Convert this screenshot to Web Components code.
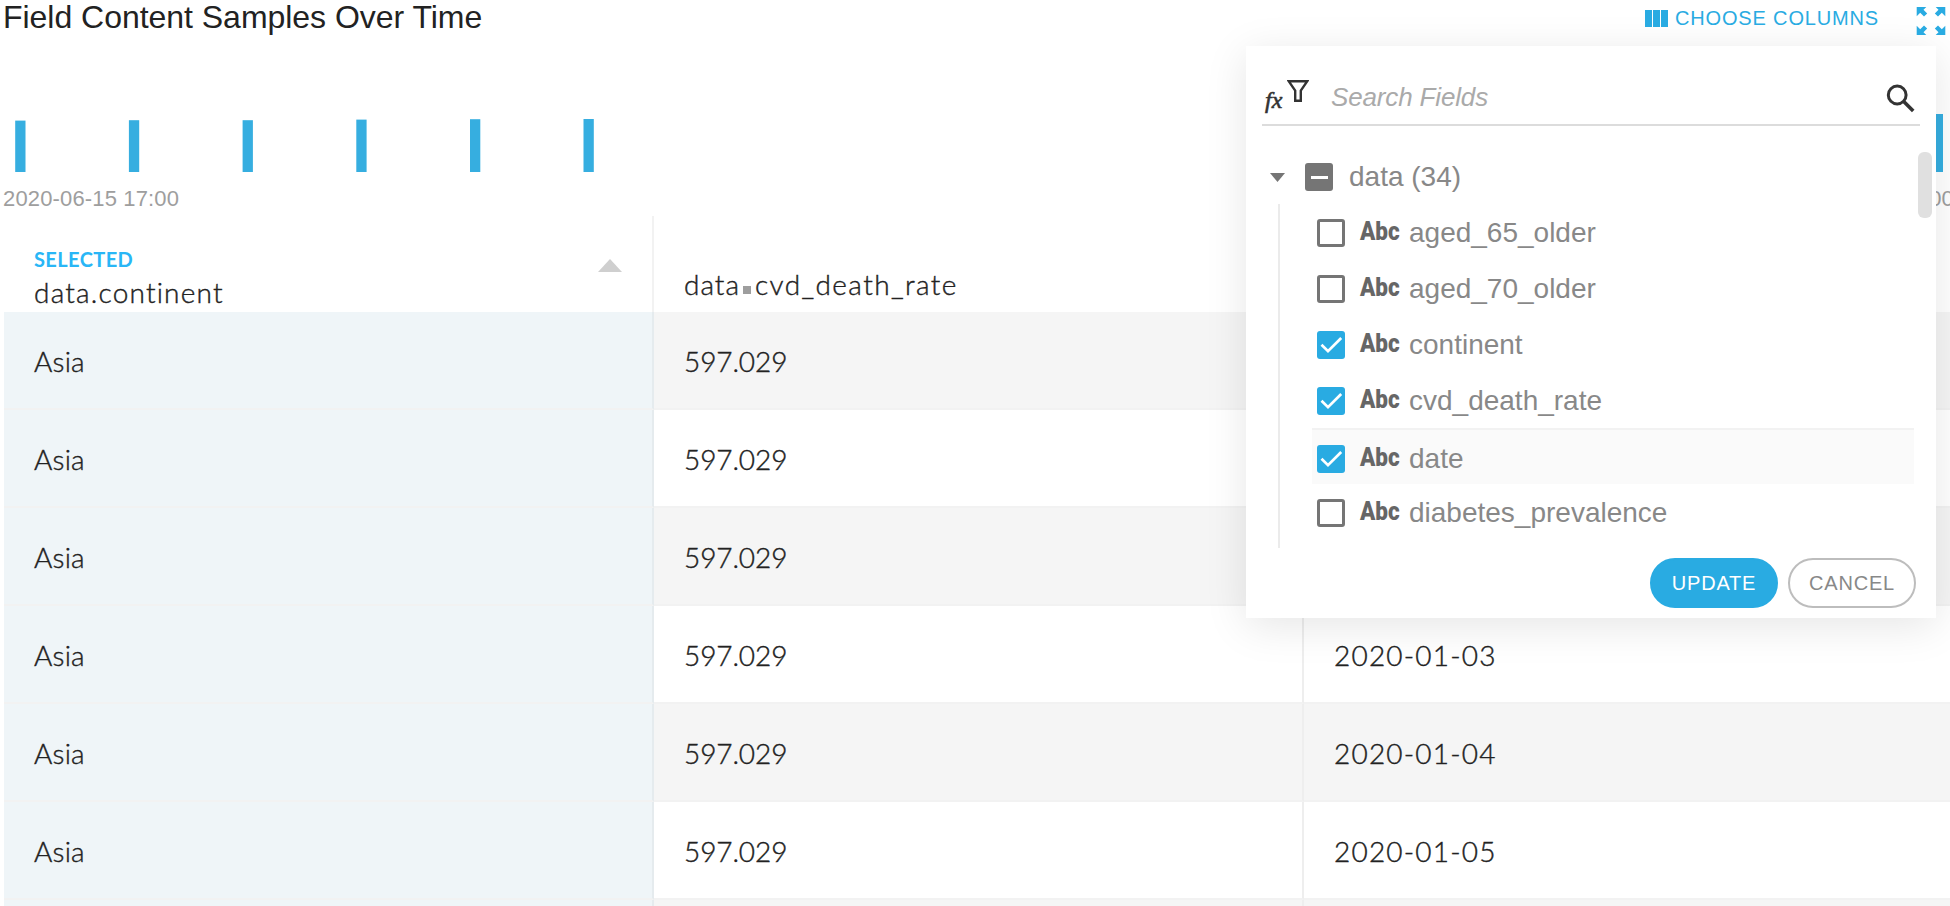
<!DOCTYPE html>
<html lang="en">
<head>
<meta charset="utf-8">
<title>Field Content Samples Over Time</title>
<style>
html,body{margin:0;height:906px;overflow:hidden;background:#fff}
body{font-family:"Liberation Sans",Arial,sans-serif;color:#222}
</style>
</head>
<body>
<samples-page></samples-page>
<script>
function define(name, html, setup) {
  const template = document.createElement('template');
  template.innerHTML = html;
  customElements.define(name, class extends HTMLElement {
    connectedCallback() {
      if (this.shadowRoot) return;
      this.attachShadow({ mode: 'open' }).append(template.content.cloneNode(true));
      if (setup) setup(this, this.shadowRoot);
    }
  });
}

define('page-header', `
<style>
:host{display:flex;height:46px;box-sizing:border-box;padding-left:3px}
h1{margin:0;font-weight:400;font-size:32px;line-height:34px;flex:1;letter-spacing:-.03px}
.choose{display:flex;align-items:center;height:37px;gap:7px;color:#29abe2;font-size:20px;letter-spacing:.84px;margin-right:37px}
svg{display:block;fill:#29abe2}
.full{margin:5.500px 4px 0 0}
</style>
<h1>Field Content Samples Over Time</h1>
<div class="choose"><svg width="23" height="17" viewBox="0 0 23 17"><path d="M0 0h7v17H0zM8 0h7v17H8zM16 0h7v17h-7z"/></svg><span>CHOOSE COLUMNS</span></div>
<svg class="full" width="30" height="30" viewBox="0 0 30 30"><path d="M.7 1h9.6L7.5 3.8 11.2 7.5 8 10.5 4.200 6.800.7 10.300z"/><path transform="matrix(-1 0 0 1 30 0)" d="M.7 1h9.6L7.5 3.8 11.2 7.5 8 10.5 4.200 6.800.7 10.300z"/><path transform="matrix(1 0 0 -1 0 30)" d="M.7 1h9.6L7.5 3.8 11.2 7.5 8 10.5 4.200 6.800.7 10.300z"/><path transform="rotate(180 15 15)" d="M.7 1h9.6L7.5 3.8 11.2 7.5 8 10.5 4.200 6.800.7 10.300z"/></svg>`);

define('time-chart', `
<style>
:host{display:block;height:170px}
svg{display:block;margin-top:68px;fill:#36aee0}
.axis{display:flex;justify-content:space-between;font-size:22px;line-height:24px;letter-spacing:.15px;color:#9e9e9e;margin:15px -4px 0 3px}
</style>
<svg width="1950" height="58"><g></g></svg>
<div class="axis"><span>2020-06-15 17:00</span><span>00</span></div>`, (host, root) => {
  const bars = [[15.2, 6.600], [128.9, 6.200], [242.6, 6.200], [356.300, 5.600], [470, 5.200], [583.5, 5], [1932.700, 0]];
  host.style.marginTop = '-68px';
  host.style.paddingTop = '68px';
  host.style.boxSizing = 'content-box';
  root.querySelector('g').innerHTML = bars.map(([x, y]) => `<rect x="${x}" y="${y}" width="10.3" height="${58 - y}"/>`).join('');
});

define('table-row', `
<style>
:host{display:grid;grid-template-columns:650px 650px 1fr;height:98px;font:300 28px/96px Lato,"Open Sans",sans-serif;-webkit-text-stroke:.4px #222}
div{box-sizing:border-box;height:98px;padding:1px 0 0 30px;border-bottom:2px solid #f2f2f2;border-right:2px solid #eee;white-space:nowrap}
.sel{background:#eff5f8;border-right-color:#e5ebee;letter-spacing:.2px}
:host([odd]) .plain{background:#f5f5f5}
.n{padding-left:30px;letter-spacing:-.1px}
.d{border-right:0;letter-spacing:1.2px}
</style>
<div class="sel"><slot name="a"></slot></div><div class="plain n"><slot name="b"></slot></div><div class="plain d"><slot name="c"></slot></div>`);

define('sample-table', `
<style>
:host{display:block;padding-left:4px}
header{display:grid;grid-template-columns:650px 650px 1fr;height:96px;font:300 28px/32px Lato,"Open Sans",sans-serif}
header>div{box-sizing:border-box;border-right:2px solid #f2f2f2;padding-left:30px}
header>div:last-child{border:0}
.first{display:flex;justify-content:space-between;padding-top:31px}
.label{font-size:20px;line-height:24px;font-weight:700;color:#29b6f6;letter-spacing:.4px}
.name{letter-spacing:1.2px;margin-top:5px}
.name,.p,.q{-webkit-text-stroke:.4px #222}
svg{display:block;margin:12px 30px 0 0;fill:#cfcfcf}
.second{display:flex;padding-top:52px}
.dot{width:8px;height:8px;background:#9e9e9e;margin:18px 4px 0 3px}
.p{letter-spacing:1px}
.q{letter-spacing:1.4px}
</style>
<header><div class="first"><div><div class="label">SELECTED</div><div class="name">data.continent</div></div><svg width="24" height="13"><path d="M12 0 24 13H0z"/></svg></div>
<div class="second"><span class="p">data</span><i class="dot"></i><span class="q">cvd_death_rate</span></div><div></div></header>
<section></section>`, (host, root) => {
  const dates = ['', '', '', '2020-01-03', '2020-01-04', '2020-01-05', ''];
  root.querySelector('section').innerHTML = dates.map((d, i) =>
    `<table-row ${i % 2 ? '' : 'odd'}>${i < 6 ? `<span slot="a">Asia</span><span slot="b">597.029</span><span slot="c">${d}</span>` : ''}</table-row>`).join('');
});

define('field-item', `
<style>
:host{display:flex;align-items:center;height:56px;box-sizing:border-box;padding-left:5px;color:#888;font-size:28px;line-height:32px}
:host([hover]){background:#fafafa;border-top:2px solid #f2f2f2;margin:-1px 0 1px;padding-top:4px}
.box{width:28px;height:28px;box-sizing:border-box;border:3px solid #757575;border-radius:3px;flex:none}
svg{display:none}
:host([checked]) .box{border:0;background:#29abe2}
:host([checked]) svg{display:block}
.abc{font:700 25px/32px Roboto,sans-serif;color:#666;width:49px;margin-left:15px;position:relative;top:-1px}
.abc b{display:inline-block;transform:scaleX(.9);transform-origin:0 0}
</style>
<div class="box"><svg width="28" height="28"><path d="M4.500 13.700 11 20.200 24.200 7" fill="none" stroke="#fff" stroke-width="2.700"/></svg></div><span class="abc"><b>Abc</b></span><slot></slot>`);

define('pill-button', `
<style>
:host{display:flex;box-sizing:border-box;width:128px;height:50px;border-radius:25px;border:2px solid #bdbdbd;color:#888;justify-content:center;align-items:center;font-size:20px;letter-spacing:.8px}
:host([primary]){background:#29abe2;border-color:#29abe2;color:#fff}
</style><slot></slot>`);

define('field-picker', `
<style>
:host{display:flex;flex-direction:column;box-sizing:border-box;width:690px;height:572px;background:#fff;box-shadow:0 8px 40px rgba(0,0,0,.1);padding:0 16px}
.search{display:flex;height:80px;box-sizing:border-box;border-bottom:2px solid #dcdcdc}
.fx{font:italic 400 24px/24px "Liberation Serif",serif;color:#333;-webkit-text-stroke:.6px #333;width:22px;padding:42px 0 0 3px;letter-spacing:0}
.filter{margin-top:34px}
.ph{font-style:italic;font-size:26px;line-height:30px;color:#aaa;margin:36px 0 0 22px;flex:1;letter-spacing:-.15px}
.mag{margin:38px 5px 0 0}
.body{position:relative;height:422px}
.root{display:flex;align-items:center;height:56px;padding:23px 0 0 8px;color:#888;font-size:28px}
.minus{width:28px;height:28px;border-radius:3px;background:#757575;display:grid;place-items:center;margin:0 16px 0 20px}
.minus i{width:17px;height:3px;background:#fff}
.tree{margin:-1px 6px 0 16px;border-left:2px solid #ebebeb;height:344px;padding:1px 0 0 32px;box-sizing:border-box;overflow:hidden}
.thumb{position:absolute;left:656px;top:26px;width:14px;height:66px;border-radius:6px;background:#e0e0e0}
footer{display:flex;justify-content:flex-end;gap:10px;margin:10px 4px 0}
</style>
<div class="search"><span class="fx">fx</span>
<svg class="filter" width="22" height="22" viewBox="0 0 22 22"><path d="M1.700 1.200H20.300L13.800 10.600V20.800H8.200V10.600Z" fill="none" stroke="#333" stroke-width="2.400"/></svg>
<span class="ph">Search Fields</span>
<svg class="mag" width="29" height="29" viewBox="0 0 29 29"><circle cx="11.200" cy="11" r="8.900" fill="none" stroke="#333" stroke-width="3"/><path d="M17.500 17.300 27.200 27" stroke="#333" stroke-width="3.600"/></svg></div>
<div class="body"><div class="root"><svg width="15" height="9"><path d="M0 0h15L7.500 9z" fill="#757575"/></svg><span class="minus"><i></i></span><span>data (34)</span></div>
<div class="tree"><field-item>aged_65_older</field-item><field-item>aged_70_older</field-item><field-item checked>continent</field-item><field-item checked>cvd_death_rate</field-item><field-item checked hover>date</field-item><field-item>diabetes_prevalence</field-item></div><i class="thumb"></i></div>
<footer><pill-button primary>UPDATE</pill-button><pill-button>CANCEL</pill-button></footer>`);

define('samples-page', `
<style>
:host{display:flow-root;position:relative;width:1950px;height:906px;overflow:hidden}
field-picker{position:absolute;left:1246px;top:46px}
page-header{position:relative;z-index:1}
time-chart{display:flow-root}
</style>
<page-header></page-header><time-chart></time-chart><sample-table></sample-table><field-picker></field-picker>`);
</script>
</body>
</html>
